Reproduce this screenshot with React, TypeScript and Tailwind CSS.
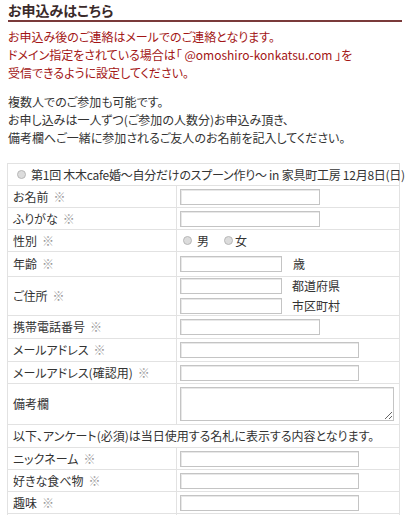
import React from "react";

const Radio = () => (
  <span className="inline-block h-[9px] w-[9px] shrink-0 rounded-full border border-[#b8b8b8] bg-[#dcdcdc]" />
);

const Req = () => <span className="ml-[5px] text-[#999]">※</span>;

function Row({ label, req = true, h = "h-[22px]", children }: { label: string; req?: boolean; h?: string; children?: React.ReactNode }) {
  return (
    <tr className={h}>
      <td className="border border-[#e2e2e2] pl-[5px] align-middle">
        {label}
        {req && <Req />}
      </td>
      <td className="border border-[#e2e2e2] pl-[3px] align-middle">{children}</td>
    </tr>
  );
}

const Field = ({ w }: { w: string }) => (
  <input type="text" className={`block h-[16px] ${w} border border-[#c4c4c4] bg-white shadow-[inset_1px_1px_0_#e8e8e8] outline-none`} />
);

export default function App() {
  return (
    <div className="min-h-[515px] w-[410px] overflow-hidden bg-white px-[8px] pt-[2px] font-['Noto_Sans_CJK_JP',sans-serif] text-[12px] leading-[18px] text-[#333] [font-feature-settings:'palt']">
      <h2 className="border-b-2 border-[#7a3a3a] pb-[1px] text-[14px] font-bold leading-[17px] text-[#3a2a2a]">お申込みはこちら</h2>

      <p className="mt-[6px] text-[#a31515]">
        お申込み後のご連絡はメールでのご連絡となります。
        <br />
        ドメイン指定をされている場合は「 @omoshiro-konkatsu.com 」を
        <br />
        受信できるように設定してください。
      </p>

      <p className="mt-[11px]">
        複数人でのご参加も可能です。
        <br />
        お申し込みは一人ずつ(ご参加の人数分)お申込み頂き、
        <br />
        備考欄へご一緒に参加されるご友人のお名前を記入してください。
      </p>

      <table className="-ml-px mt-[16px] w-[393px] table-fixed border-collapse">
        <colgroup>
          <col className="w-[169px]" />
          <col />
        </colgroup>
        <tbody>
          <tr className="h-[22px]">
            <td colSpan={2} className="border border-[#e2e2e2] pl-[9px]">
              <div className="flex items-center gap-[5px] whitespace-nowrap tracking-[-0.25px]">
                <Radio />
                <span>第1回 木木cafe婚〜自分だけのスプーン作り〜 in 家具町工房 12月8日(日)</span>
              </div>
            </td>
          </tr>
          <Row label="お名前">
            <Field w="w-[140px]" />
          </Row>
          <Row label="ふりがな">
            <Field w="w-[140px]" />
          </Row>
          <Row label="性別">
            <div className="flex items-center pl-[3px]">
              <Radio />
              <span className="ml-[5px]">男</span>
              <span className="ml-[15px]" />
              <Radio />
              <span className="ml-[2px]">女</span>
            </div>
          </Row>
          <Row label="年齢" h="h-[25px]">
            <div className="flex items-center">
              <Field w="w-[102px]" />
              <span className="ml-[11px]">歳</span>
            </div>
          </Row>
          <Row label="ご住所" h="h-[38px]">
            <div className="flex flex-col gap-[2px]">
              <div className="flex items-center">
                <Field w="w-[102px]" />
                <span className="ml-[10px]">都道府県</span>
              </div>
              <div className="flex items-center">
                <Field w="w-[102px]" />
                <span className="ml-[10px]">市区町村</span>
              </div>
            </div>
          </Row>
          <Row label="携帯電話番号" h="h-[23px]">
            <Field w="w-[140px]" />
          </Row>
          <Row label="メールアドレス" h="h-[23px]">
            <Field w="w-[179px]" />
          </Row>
          <Row label="メールアドレス(確認用)">
            <Field w="w-[179px]" />
          </Row>
          <Row label="備考欄" req={false} h="h-[41px]">
            <textarea className="block h-[34px] w-[214px] resize border border-[#c4c4c4] bg-white shadow-[inset_1px_1px_0_#e8e8e8] outline-none" />
          </Row>
          <tr className="h-[23px]">
            <td colSpan={2} className="border border-[#e2e2e2] pl-[5px]">
              以下、アンケート(必須)は当日使用する名札に表示する内容となります。
            </td>
          </tr>
          <Row label="ニックネーム">
            <Field w="w-[179px]" />
          </Row>
          <Row label="好きな食べ物">
            <Field w="w-[179px]" />
          </Row>
          <Row label="趣味">
            <Field w="w-[179px]" />
          </Row>
          <tr className="h-[22px]">
            <td className="border border-[#e2e2e2]" />
            <td className="border border-[#e2e2e2]" />
          </tr>
        </tbody>
      </table>
    </div>
  );
}
